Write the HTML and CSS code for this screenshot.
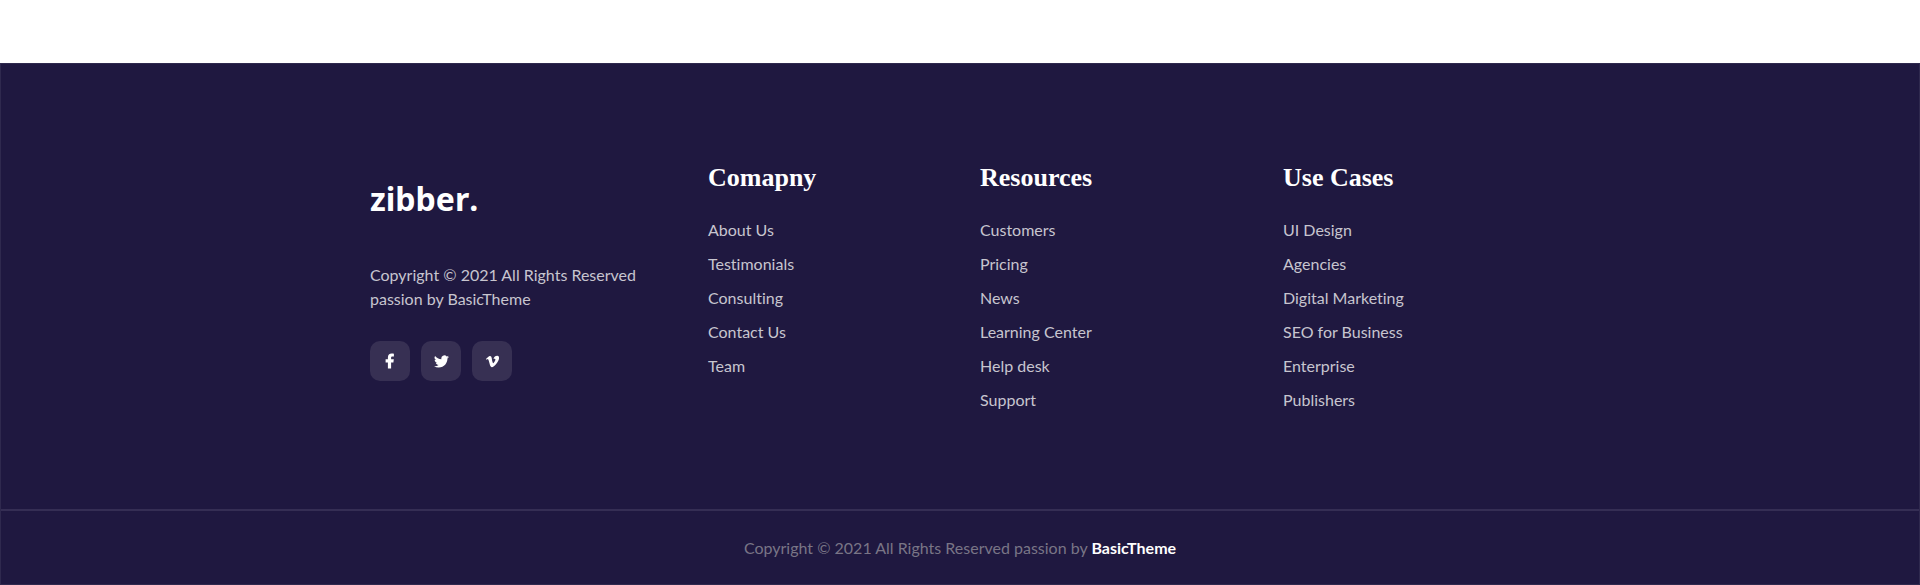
FILE: index.html
```html
<!DOCTYPE html>
<html lang="en">
  <head>
    <meta charset="UTF-8" />
    <meta name="viewport" content="width=device-width, initial-scale=1.0" />
    <title>zibber.</title>
    <link rel="stylesheet" href="styles.css">
  </head>
  <body>
    <footer class="footer">
      <div class="footer-top">
        <div class="about">
          <a class="logo" href="#">zibber.</a>
          <p>Copyright © 2021 All Rights Reserved passion by BasicTheme</p>
          <div class="social">
            <a href="#" aria-label="Facebook">
              <svg width="10" height="16" viewBox="0 0 10 16"><path d="M2.900 15.500V9.500H.6V6.300H2.900V4.500C2.900 2.100 4.300.6 6.700.6c.9 0 1.700.1 2.200.1v2.700H7.400c-1.100 0-1.300.6-1.300 1.300v1.600h2.700l-.4 3.200H6.100v6z" /></svg>
            </a>
            <a href="#" aria-label="Twitter">
              <svg width="15" height="15" viewBox="0 0 24 24"><path d="M24 4.600c-.9.400-1.800.7-2.800.8 1-.6 1.800-1.600 2.200-2.700-1 .6-2 1-3.100 1.200a4.900 4.900 0 0 0-8.400 4.500C7.700 8.100 4.100 6.100 1.700 3.100a4.900 4.900 0 0 0 1.500 6.600c-.8 0-1.600-.2-2.200-.6v.1c0 2.300 1.700 4.300 3.900 4.800-.7.200-1.500.2-2.200.1.600 2 2.400 3.400 4.600 3.400A9.900 9.900 0 0 1 0 19.500 14 14 0 0 0 7.500 21.700c9.100 0 14-7.500 14-14v-.6c1-.7 1.800-1.600 2.500-2.500z" /></svg>
            </a>
            <a href="#" aria-label="Vimeo">
              <svg width="13" height="13" viewBox="0 0 24 24"><path d="M24 6.400c-.1 2.300-1.800 5.500-4.900 9.600-3.300 4.300-6 6.400-8.300 6.400-1.400 0-2.600-1.300-3.500-3.900L5.400 11.500c-.7-2.600-1.500-3.900-2.300-3.900-.2 0-.8.4-1.900 1.100L0 7.200C1.200 6.200 2.300 5.200 3.500 4.100 5.100 2.800 6.300 2 7.100 2c1.900-.2 3 1.100 3.500 3.800.5 3 .8 4.800 1 5.500.5 2.500 1.100 3.700 1.800 3.700.5 0 1.300-.8 2.300-2.400s1.600-2.900 1.700-3.700c.1-1.400-.4-2.100-1.700-2.100-.6 0-1.200.1-1.900.4 1.200-4 3.600-6 7.100-5.900 2.500.1 3.300 1.800 3.100 5.100z" /></svg>
            </a>
          </div>
        </div>
        <nav class="links" aria-labelledby="company">
          <h2 id="company">Comapny</h2>
          <ul>
            <li><a href="#">About Us</a></li>
            <li><a href="#">Testimonials</a></li>
            <li><a href="#">Consulting</a></li>
            <li><a href="#">Contact Us</a></li>
            <li><a href="#">Team</a></li>
          </ul>
        </nav>
        <nav class="links" aria-labelledby="resources">
          <h2 id="resources">Resources</h2>
          <ul>
            <li><a href="#">Customers</a></li>
            <li><a href="#">Pricing</a></li>
            <li><a href="#">News</a></li>
            <li><a href="#">Learning Center</a></li>
            <li><a href="#">Help desk</a></li>
            <li><a href="#">Support</a></li>
          </ul>
        </nav>
        <nav class="links" aria-labelledby="cases">
          <h2 id="cases">Use Cases</h2>
          <ul>
            <li><a href="#">UI Design</a></li>
            <li><a href="#">Agencies</a></li>
            <li><a href="#">Digital Marketing</a></li>
            <li><a href="#">SEO for Business</a></li>
            <li><a href="#">Enterprise</a></li>
            <li><a href="#">Publishers</a></li>
          </ul>
        </nav>
      </div>
      <div class="footer-bottom">
        <p>Copyright © 2021 All Rights Reserved passion by <a href="#">BasicTheme</a></p>
      </div>
    </footer>
  </body>
</html>
```
FILE: styles.css
```css
* {
  box-sizing: border-box;
}
body {
  margin: 0;
  padding-top: 63px;
  background: #fff;
  font-family: Lato, sans-serif;
  font-size: 16px;
  line-height: 24px;
  font-variant-ligatures: none;
}
a {
  color: inherit;
  text-decoration: none;
}
p {
  margin: 0;
}
.footer {
  background: #1f1840;
  border: 1px solid #2f294e;
  color: #c7c5cf;
}
.footer-top {
  display: grid;
  grid-template-columns: 338fr 272fr 303fr 267fr;
  max-width: 1180px;
  margin: 0 auto;
  padding: 96px 0 87px;
}
.about {
  padding-top: 19px;
}
.about p {
  max-width: 280px;
  margin-top: 44px;
}
.logo {
  display: block;
  color: #fff;
  font-family: "Noto Sans", sans-serif;
  font-size: 32px;
  font-weight: 700;
  font-kerning: none;
  line-height: 40px;
}
.social {
  display: flex;
  gap: 11px;
  margin-top: 30px;
}
.social a {
  display: flex;
  align-items: center;
  justify-content: center;
  width: 40px;
  height: 40px;
  border-radius: 10px;
  background: #373053;
}
.social svg {
  fill: #fff;
}
.links h2 {
  margin: 0 0 22px;
  color: #fff;
  font-family: "Liberation Serif", serif;
  font-size: 26px;
  font-weight: 700;
  line-height: 36px;
}
.links ul {
  margin: 0;
  padding: 0;
  list-style: none;
}
.links li {
  margin-bottom: 10px;
}
.footer-bottom {
  padding: 25px 20px 24px;
  border-top: 2px solid #352e54;
  color: #797586;
  text-align: center;
}
.footer-bottom a {
  color: #fff;
  font-weight: 700;
}
```
